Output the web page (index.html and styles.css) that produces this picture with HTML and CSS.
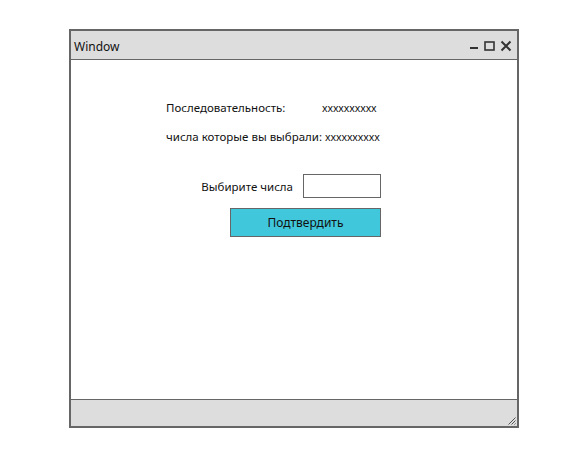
FILE: index.html
```html
<!DOCTYPE html>
<html lang="ru">
<head>
<meta charset="utf-8">
<title>Window</title>
<link rel="stylesheet" href="styles.css">
</head>
<body>
<div class="window">
  <div class="titlebar">
    <span class="title">Window</span>
    <div class="controls">
      <svg width="9" height="12" viewBox="0 0 9 12"><rect x="0" y="7" width="8" height="2" fill="#333"/></svg>
      <svg width="11" height="12" viewBox="0 0 11 12"><rect x="1" y="2" width="9" height="8" fill="none" stroke="#333" stroke-width="1.6"/></svg>
      <svg width="12" height="12" viewBox="0 0 12 12"><path d="M1.5 1.5 L10.5 10.5 M10.5 1.5 L1.5 10.5" stroke="#333" stroke-width="2"/></svg>
    </div>
  </div>
  <div class="content">
    <div class="info">
      <div class="row"><span class="label">Последовательность:</span><span class="val">xxxxxxxxxx</span></div>
      <div class="row"><span>числа которые вы выбрали:</span><span class="val2">xxxxxxxxxx</span></div>
    </div>
    <div class="form">
      <div class="pick">
        <span>Выбирите числа</span>
        <div class="input"></div>
      </div>
      <div class="button">Подтвердить</div>
    </div>
  </div>
  <div class="footer">
    <svg class="grip" width="9" height="9" viewBox="0 0 9 9"><path d="M8.5 1.5 L1.5 8.5 M8.5 4.5 L4.5 8.5 M8.5 7.5 L7.5 8.5" stroke="#555" stroke-width="1"/></svg>
  </div>
</div>
</body>
</html>
```
FILE: styles.css
```css
html, body {
  margin: 0;
  padding: 0;
  background: #fff;
}
body {
  padding: 29px 0 0 69px;
  font-family: "Noto Sans", "Open Sans", sans-serif;
  font-size: 11.5px;
  color: #111;
}
.window {
  width: 446px;
  height: 395px;
  border: 2px solid #666;
  display: flex;
  flex-direction: column;
}
.titlebar {
  height: 28px;
  background: #dddddd;
  border-bottom: 1px solid #666;
  display: flex;
  align-items: center;
  justify-content: space-between;
  padding: 0 5px 0 3px;
}
.title {
  font-size: 12px;
  color: #111;
  padding-top: 2px;
}
.controls {
  display: flex;
  align-items: center;
  gap: 5px;
  padding-top: 2px;
}
.controls svg { display: block; }
.content {
  flex: 1;
  background: #fff;
  padding: 40px 0 0 95px;
}
.info {
  display: flex;
  flex-direction: column;
  gap: 13px;
  line-height: 16px;
  white-space: nowrap;
}
.row {
  display: flex;
  align-items: baseline;
}
.label { width: 156px; }
.val, .val2 { font-size: 10.5px; letter-spacing: -0.1px; }
.val2 { margin-left: 3px; }
.form {
  width: 215px;
  margin-top: 29px;
  display: flex;
  flex-direction: column;
  align-items: flex-end;
  gap: 10px;
}
.pick {
  display: flex;
  align-items: center;
  gap: 10px;
}
.input {
  width: 76px;
  height: 22px;
  border: 1px solid #666;
  background: #fff;
}
.button {
  width: 149px;
  height: 27px;
  border: 1px solid #666;
  background: #40c7db;
  display: flex;
  align-items: center;
  justify-content: center;
  font-size: 12px;
}
.footer {
  height: 25px;
  border-top: 1px solid #666;
  background: #dddddd;
  display: flex;
  align-items: flex-end;
  justify-content: flex-end;
  padding: 0 1px 1px 0;
}
.grip { display: block; }
```
